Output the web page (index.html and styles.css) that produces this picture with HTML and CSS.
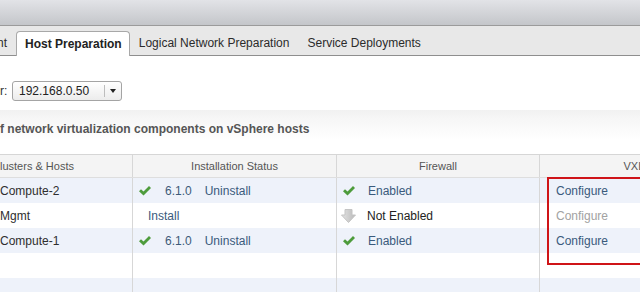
FILE: index.html
```html
<!DOCTYPE html>
<html>
<head>
<meta charset="utf-8">
<link rel="stylesheet" href="styles.css">
</head>
<body>
<div class="topbar"></div>
<div class="tabs">
  <div class="tab">nt</div>
  <div class="tab active">Host Preparation</div>
  <div class="tab">Logical Network Preparation</div>
  <div class="tab">Service Deployments</div>
</div>
<div class="content">
  <div class="selector">
    <span class="label">r:</span>
    <div class="select">
      <span class="value">192.168.0.50</span>
      <span class="drop"><span class="caret"></span></span>
    </div>
  </div>
  <div class="section"><div class="title">f network virtualization components on vSphere hosts</div></div>
  <div class="table">
    <div class="row head">
      <div class="cell c1">lusters &amp; Hosts</div>
      <div class="cell c2 center">Installation Status</div>
      <div class="cell c3 center">Firewall</div>
      <div class="cell c4 center">VXLAN</div>
    </div>
    <div class="row alt">
      <div class="cell c1">Compute-2</div>
      <div class="cell c2"><svg class="check" viewBox="0 0 12 10"><polygon points="0,5.2 2,3.2 4.5,5.6 10,0 12,2 4.5,9.6"/></svg><span class="ver">6.1.0</span><span class="link">Uninstall</span></div>
      <div class="cell c3"><svg class="check" viewBox="0 0 12 10"><polygon points="0,5.2 2,3.2 4.5,5.6 10,0 12,2 4.5,9.6"/></svg><span class="link fw">Enabled</span></div>
      <div class="cell c4"><span class="link">Configure</span></div>
    </div>
    <div class="row">
      <div class="cell c1">Mgmt</div>
      <div class="cell c2"><span class="link install">Install</span></div>
      <div class="cell c3"><svg class="down" viewBox="0 0 15 14"><defs><linearGradient id="g" x1="0" y1="0" x2="1" y2="0"><stop offset="0" stop-color="#e4e4e4"/><stop offset="1" stop-color="#b9b9b9"/></linearGradient></defs><polygon points="4,0.5 11,0.5 11,6 14.5,6 7.5,13.5 0.5,6 4,6" fill="url(#g)" stroke="#c4c4c4" stroke-width="1"/></svg><span class="plain">Not Enabled</span></div>
      <div class="cell c4"><span class="disabled">Configure</span></div>
    </div>
    <div class="row alt">
      <div class="cell c1">Compute-1</div>
      <div class="cell c2"><svg class="check" viewBox="0 0 12 10"><polygon points="0,5.2 2,3.2 4.5,5.6 10,0 12,2 4.5,9.6"/></svg><span class="ver">6.1.0</span><span class="link">Uninstall</span></div>
      <div class="cell c3"><svg class="check" viewBox="0 0 12 10"><polygon points="0,5.2 2,3.2 4.5,5.6 10,0 12,2 4.5,9.6"/></svg><span class="link fw">Enabled</span></div>
      <div class="cell c4"><span class="link">Configure</span></div>
    </div>
    <div class="row">
      <div class="cell c1"></div><div class="cell c2"></div><div class="cell c3"></div><div class="cell c4"></div>
    </div>
    <div class="row alt">
      <div class="cell c1"></div><div class="cell c2"></div><div class="cell c3"></div><div class="cell c4"></div>
    </div>
    <div class="highlight"></div>
  </div>
</div>
</body>
</html>
```
FILE: styles.css
```css
html, body {
  margin: 0;
  padding: 0;
}
body {
  width: 640px;
  height: 292px;
  overflow: hidden;
  background: #fff;
  font-family: "Liberation Sans", Arial, sans-serif;
  font-size: 12px;
  color: #333;
}
.topbar {
  height: 25px;
  background: linear-gradient(#e2e3e7, #c4c6ca);
  border-bottom: 1px solid #9b9b9b;
}
.tabs {
  display: flex;
  align-items: flex-end;
  height: 29px;
  margin-left: -12px;
  background: #e8e8e8;
  border-bottom: 1px solid #8e8e8e;
}
.tab {
  height: 23px;
  line-height: 23px;
  padding: 0 8px;
  border: 1px solid transparent;
  border-bottom: 0;
  white-space: nowrap;
  color: #2b2b2b;
}
.tab.active {
  height: 24px;
  line-height: 24px;
  margin-bottom: -1px;
  padding: 0 7px 0 8px;
  background: #fff;
  border-color: #a8a8a8;
  border-radius: 4px 4px 0 0;
  font-weight: bold;
  color: #222;
}
.selector {
  display: flex;
  align-items: center;
  margin-top: 25px;
  height: 20px;
}
.label {
  width: 12px;
  color: #333;
}
.select {
  box-sizing: border-box;
  width: 110px;
  height: 20px;
  display: flex;
  align-items: center;
  border: 1px solid #a4a4a4;
  border-radius: 3px;
  background: linear-gradient(#ffffff, #ececec);
}
.value {
  width: 85px;
  padding-left: 6px;
  color: #222;
}
.drop {
  flex: 1;
  height: 12px;
  border-left: 1px solid #bdbdbd;
  display: flex;
  align-items: center;
  justify-content: center;
}
.caret {
  width: 0;
  height: 0;
  border-top: 4px solid #222;
  border-left: 3.5px solid transparent;
  border-right: 3.5px solid transparent;
}
.section {
  box-sizing: border-box;
  margin-top: 9px;
  height: 44px;
  padding-top: 12px;
  background: linear-gradient(#f1f1f1 0, #f6f6f6 8px, #ffffff 30px);
}
.title {
  line-height: 15px;
  font-weight: bold;
  color: #555;
  white-space: nowrap;
}
.table {
  position: relative;
}
.row {
  display: grid;
  grid-template-columns: 133px 204px 203px 204px;
  height: 25px;
  background: #fff;
}
.row.alt {
  background: #eef2fa;
}
.row.head {
  box-sizing: border-box;
  height: 24px;
  border-top: 1px solid #d6d6d6;
  border-bottom: 1px solid #dedede;
  background: #f4f4f4;
}
.cell {
  box-sizing: border-box;
  border-right: 1px solid #d7d7d7;
  display: flex;
  align-items: center;
  white-space: nowrap;
  overflow: hidden;
}
.head .cell {
  font-size: 11px;
  color: #555;
}
.cell.center {
  justify-content: center;
}
.c1 {
  color: #2e2e2e;
}
.c2 .check,
.c3 .check {
  margin-left: 6px;
}
.check {
  width: 12px;
  height: 10px;
  fill: #4e9c3c;
  flex: none;
}
.down {
  width: 15px;
  height: 14px;
  margin-left: 4px;
  flex: none;
}
.ver {
  margin-left: 14px;
  color: #3d5a78;
}
.link {
  margin-left: 13px;
  color: #3a5a7c;
}
.link.fw {
  margin-left: 13px;
}
.link.install {
  margin-left: 15px;
}
.c4 .link,
.c4 .disabled {
  margin-left: 16px;
}
.disabled {
  color: #a2a2a2;
}
.plain {
  margin-left: 11px;
  color: #222;
}
.highlight {
  position: absolute;
  left: 547px;
  top: 23px;
  width: 120px;
  height: 88px;
  box-sizing: border-box;
  border: 2px solid #cf1418;
}
```
